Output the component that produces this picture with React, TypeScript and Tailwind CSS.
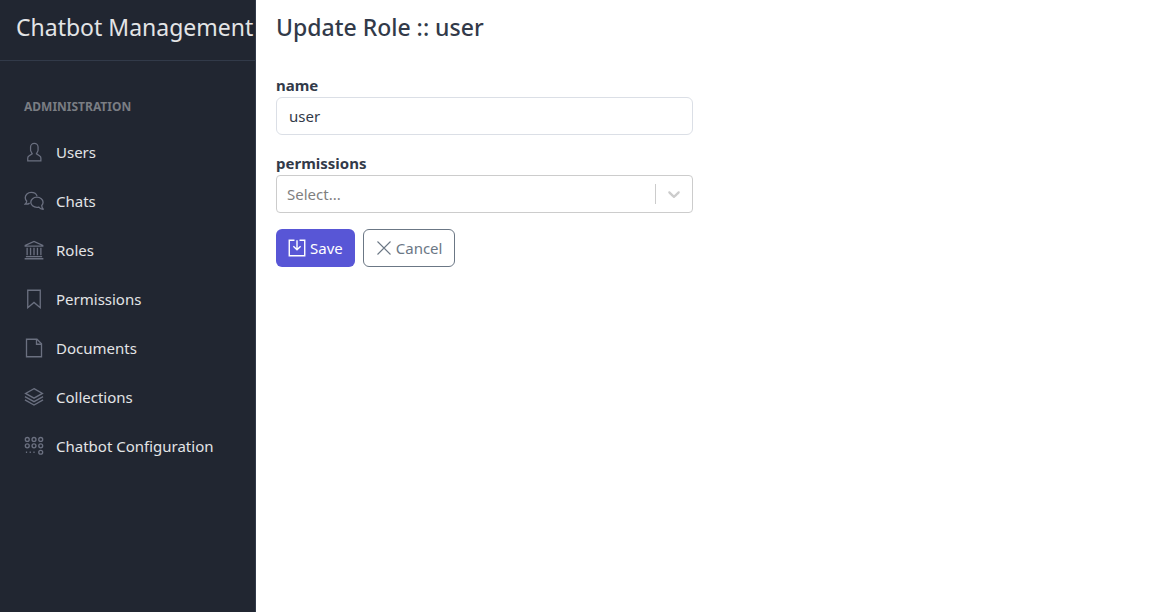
import type { ReactNode } from 'react';

const icons: Record<string, ReactNode> = {
  user: (
    <path
      fill="currentColor"
      stroke="none"
      d="M411.6,343.656l-72.823-47.334,27.455-50.334A80.23,80.23,0,0,0,376,207.681V128a112,112,0,0,0-224,0v79.681a80.236,80.236,0,0,0,9.768,38.308l27.455,50.333L116.4,343.656A79.725,79.725,0,0,0,80,410.732V496H448V410.732A79.727,79.727,0,0,0,411.6,343.656ZM416,464H112V410.732a47.836,47.836,0,0,1,21.841-40.246l97.66-63.479-41.64-76.341A48.146,48.146,0,0,1,184,207.681V128a80,80,0,0,1,160,0v79.681a48.146,48.146,0,0,1-5.861,22.985L296.5,307.007l97.662,63.479h0A47.836,47.836,0,0,1,416,410.732Z"
    />
  ),
  chats: (
    <>
      <path d="M144 310C112 334 72 340 32 336C60 314 70 286 68 256C44 232 32 204 32 172C32 96 98 36 184 36C258 36 318 76 334 132" />
      <path d="M330 158C242 158 174 216 174 288C174 360 242 418 330 418C346 418 362 416 378 412C408 450 444 468 488 468V456C468 438 456 410 454 370C476 346 488 318 488 288C488 216 418 158 330 158Z" />
    </>
  ),
  bank: (
    <>
      <path d="M32 158V140L256 36L480 140V158Z" />
      <path d="M80 200V388M168 200V388M256 200V388M344 200V388M432 200V388M48 424H464M16 480H496" />
    </>
  ),
  bookmark: <path d="M96 32H416V478L256 344L96 478Z" />,
  file: (
    <>
      <path d="M64 32H332L448 148V480H64Z" />
      <path d="M320 32V160H448" />
    </>
  ),
  layers: (
    <>
      <path d="M256 42L472 164L256 286L40 164Z" />
      <path d="M24 246L256 376L488 246M24 330L256 460L488 330" />
    </>
  ),
  grid: (
    <>
      <circle cx="84" cy="88" r="50" />
      <circle cx="256" cy="88" r="50" />
      <circle cx="428" cy="88" r="50" />
      <circle cx="84" cy="252" r="50" />
      <circle cx="256" cy="252" r="50" />
      <circle cx="428" cy="252" r="50" />
      <circle cx="428" cy="416" r="50" />
      <path d="M48 416H80M144 416H176M240 416H272" />
    </>
  ),
  save: (
    <g strokeWidth="40">
      <path d="M184 36H36V476H476V36H328" />
      <path d="M256 36V300M152 204L256 308L360 204" />
    </g>
  ),
  close: <path d="M48 48L464 464M464 48L48 464" />,
};

function Icon({ name, className }: { name: string; className: string }) {
  return (
    <svg
      viewBox="0 0 512 512"
      fill="none"
      stroke="currentColor"
      strokeWidth="34"
      aria-hidden="true"
      className={`shrink-0 ${className}`}
    >
      {icons[name]}
    </svg>
  );
}

const links = [
  { label: 'Users', icon: 'user' },
  { label: 'Chats', icon: 'chats' },
  { label: 'Roles', icon: 'bank' },
  { label: 'Permissions', icon: 'bookmark' },
  { label: 'Documents', icon: 'file' },
  { label: 'Collections', icon: 'layers' },
  { label: 'Chatbot Configuration', icon: 'grid' },
];

export default function App() {
  return (
    <div className="flex min-h-screen bg-white font-['Segoe_UI','Noto_Sans',sans-serif] text-[15px] leading-6 text-[#323a49]">
      <aside className="w-64 shrink-0 border-r border-[#323a49] bg-[#212631] text-[#e3e4e6]">
        <div className="flex h-[61px] items-start border-b border-[#323a49] px-4 pt-3 text-[23px] leading-[30px] whitespace-nowrap">
          Chatbot Management
        </div>
        <nav className="px-2 pt-2" aria-label="Administration">
          <h2 className="mt-4 px-4 pt-3 pb-[10px] text-xs leading-5 font-bold text-[#7a7d83] uppercase">
            Administration
          </h2>
          <ul>
            {links.map((link) => (
              <li key={link.label}>
                <a href="#" className="flex h-[49px] items-center gap-3 px-4 whitespace-nowrap">
                  <Icon name={link.icon} className="size-5 text-[#6b7080]" />
                  {link.label}
                </a>
              </li>
            ))}
          </ul>
        </nav>
      </aside>
      <main className="min-w-0 flex-1 px-5 pt-3">
        <h1 className="text-[23px] leading-[30px] font-medium">Update Role :: user</h1>
        <div className="mt-[31px] grid grid-cols-2 gap-5">
          <form onSubmit={(e) => e.preventDefault()}>
            <label htmlFor="name" className="block leading-6 font-bold">
              name
            </label>
            <input
              id="name"
              defaultValue="user"
              className="block h-[38px] w-full rounded-md border border-[#dbdfe6] px-3 outline-none"
            />
            <label htmlFor="permissions" className="mt-4 block leading-6 font-bold">
              permissions
            </label>
            <div className="flex h-[38px] items-center rounded border border-[#cccccc]">
              <input
                id="permissions"
                role="combobox"
                aria-expanded="false"
                placeholder="Select..."
                className="min-w-0 flex-1 px-[10px] outline-none placeholder:text-[#808080]"
              />
              <span className="h-5 w-px bg-[#cccccc]" />
              <button type="button" aria-label="Show permissions" className="p-2 text-[#cccccc]">
                <svg viewBox="0 0 20 20" fill="currentColor" className="size-5" aria-hidden="true">
                  <path d="M4.516 7.548c.436-.446 1.043-.481 1.576 0L10 11.295l3.908-3.747c.533-.481 1.141-.446 1.574 0 .436.445.408 1.197 0 1.615-.406.418-4.695 4.502-4.695 4.502a1.095 1.095 0 0 1-1.576 0S4.924 9.581 4.516 9.163s-.436-1.17 0-1.615z" />
                </svg>
              </button>
            </div>
            <div className="mt-4 flex gap-2">
              <button
                type="submit"
                className="flex h-[38px] items-center gap-1 rounded-md bg-[#5856d6] px-3 text-white"
              >
                <Icon name="save" className="size-[18px]" />
                Save
              </button>
              <button
                type="button"
                className="flex h-[38px] items-center gap-1 rounded-md border border-[#6b7785] px-3 text-[#6b7785]"
              >
                <Icon name="close" className="size-4" />
                Cancel
              </button>
            </div>
          </form>
        </div>
      </main>
    </div>
  );
}
